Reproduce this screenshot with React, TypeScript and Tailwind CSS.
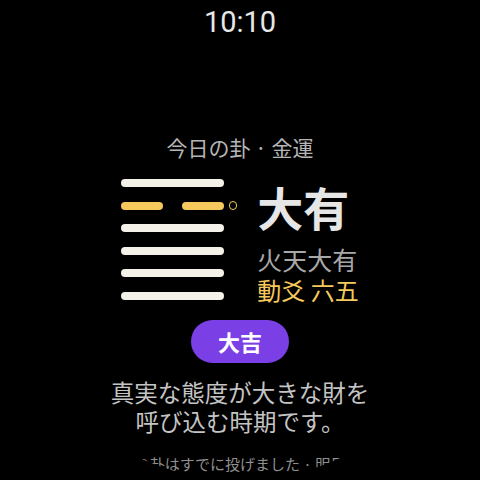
import React from "react";

const jp = { fontFamily: '"Noto Sans CJK JP", "Noto Sans", sans-serif' };

function Line({ broken, moving }: { broken?: boolean; moving?: boolean }) {
  return (
    <div className="flex items-center">
      {broken ? (
        <div className="flex w-[103px] justify-between">
          <div className="h-2 w-[42px] rounded-full bg-[#f5c95c]" />
          <div className="h-2 w-[42px] rounded-full bg-[#f5c95c]" />
        </div>
      ) : (
        <div className="h-2 w-[103px] rounded-full bg-[#f3f1e8]" />
      )}
      <div className="ml-[5px] flex h-2 w-2 items-center justify-center">
        {moving && <div className="h-[9px] w-[9px] rounded-full border-[1.5px] border-[#f5c95c]" />}
      </div>
    </div>
  );
}

export default function App() {
  return (
    <div className="w-[480px] h-[480px] bg-black">
      <div className="w-[480px] h-[480px] rounded-full overflow-hidden bg-black flex flex-col items-center" style={jp}>
        <div
          className="mt-[8px] h-[29px] text-[29px] leading-[29px] text-[#e8e8e8]"
          style={{ fontFamily: 'Roboto, "Noto Sans", sans-serif' }}
        >
          10:10
        </div>
        <div className="mt-[99px] text-[21px] leading-[22px] text-[#b5b5b5]">今日の卦 · 金運</div>
        <div className="mt-[21px] flex h-[121px] items-start gap-[20px]">
          <div className="flex flex-col gap-[14.5px]">
            <Line />
            <Line broken moving />
            <Line />
            <Line />
            <Line />
            <Line />
          </div>
          <div className="flex flex-col">
            <div className="mt-[4px] text-[46px] leading-[46px] font-bold text-[#e6e6e6]">大有</div>
            <div className="mt-[16px] text-[25px] leading-[28px] text-[#a8a8a8]">火天大有</div>
            <div className="mt-[2.5px] text-[24px] leading-[28px] text-[#f5c95c]">動爻 六五</div>
          </div>
        </div>
        <div className="mt-[20px] flex h-[43px] w-[98px] items-center justify-center rounded-full bg-[#7b3fe6] text-[22px] font-bold text-white">
          大吉
        </div>
        <div className="mt-[15px] text-center text-[23.5px] leading-[29px] text-[#c4c4c4]">
          真実な態度が大きな財を
          <br />
          呼び込む時期です。
        </div>
        <div className="mt-[20px] whitespace-nowrap text-[15px] leading-[15px] text-[#8f8f8f]">
          今日の卦はすでに投げました · 明日また
        </div>
      </div>
    </div>
  );
}
